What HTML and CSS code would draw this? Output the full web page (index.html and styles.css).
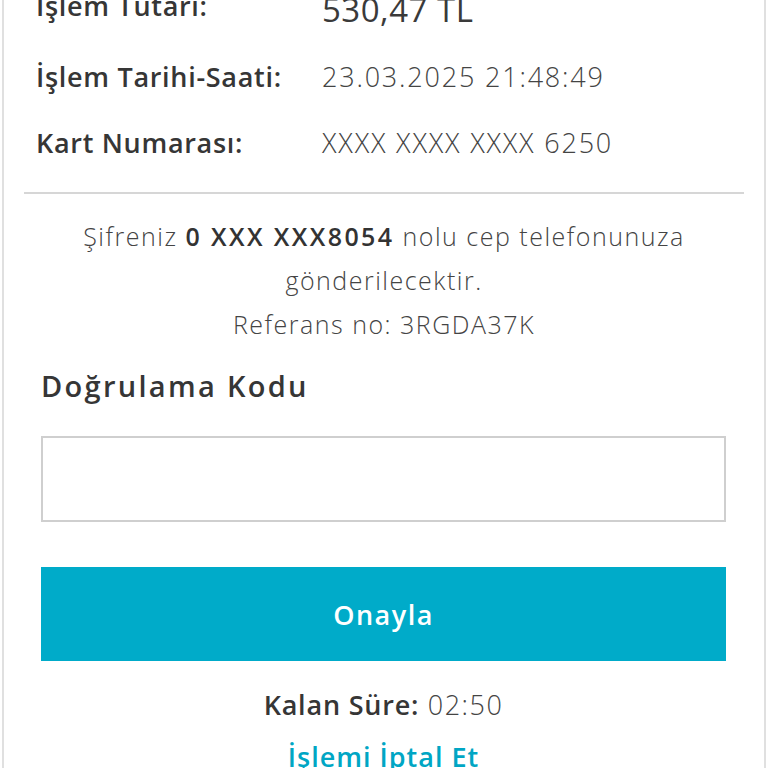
FILE: index.html
```html
<!DOCTYPE html>
<html lang="tr">
<head>
<meta charset="utf-8">
<link rel="stylesheet" href="styles.css">
</head>
<body>
<div class="card">
  <div class="details">
    <div class="row first"><span class="label">İşlem Tutarı:</span><span class="value amount">530,47 TL</span></div>
    <div class="row"><span class="label">İşlem Tarihi-Saati:</span><span class="value">23.03.2025 21:48:49</span></div>
    <div class="row"><span class="label">Kart Numarası:</span><span class="value">XXXX XXXX XXXX 6250</span></div>
  </div>
  <hr class="divider">
  <div class="info">
    <p>Şifreniz <b>0 XXX XXX8054</b> nolu cep telefonunuza gönderilecektir.</p>
    <p>Referans no: 3RGDA37K</p>
  </div>
  <div class="form">
    <label class="code-label" for="code">Doğrulama Kodu</label>
    <input class="code-input" id="code" type="text">
    <button class="confirm" type="button">Onayla</button>
    <div class="timer"><b>Kalan Süre:</b> 02:50</div>
    <a class="cancel" href="#">İşlemi İptal Et</a>
  </div>
</div>
</body>
</html>
```
FILE: styles.css
```css
html, body {
  margin: 0;
  padding: 0;
  background: #fff;
}
body {
  font-family: "Open Sans", "Lato", sans-serif;
  color: #3a3a3a;
  overflow: hidden;
  height: 768px;
}
.card {
  box-sizing: border-box;
  margin: 0 2px;
  min-height: 800px;
  border-left: 2px solid #e0e0e0;
  border-right: 2px solid #e0e0e0;
}
.details {
  padding: 0 0 0 32px;
  margin-top: -22px;
}
.row {
  display: grid;
  grid-template-columns: 286px 1fr;
  align-items: baseline;
  height: 66px;
  line-height: 66px;
  white-space: nowrap;
}
.row.first {
  align-items: end;
  height: 56px;
  line-height: 56px;
  margin-bottom: 10px;
}
.row.first .label {
  margin-bottom: 4px;
}
.label {
  font-weight: 600;
  font-size: 27px;
  letter-spacing: 0.7px;
  color: #363636;
}
.value {
  font-weight: 300;
  font-size: 27px;
  letter-spacing: 1.8px;
  color: #444;
}
.amount {
  font-size: 33px;
  font-weight: 400;
  letter-spacing: 0.5px;
  color: #3a3a3a;
}
.divider {
  border: 0;
  height: 2px;
  background: #d6d6d6;
  margin: 16px 20px 0 20px;
}
.info {
  text-align: center;
  font-size: 25px;
  font-weight: 300;
  letter-spacing: 1.5px;
  color: #444;
  line-height: 44px;
  padding: 20px 60px 0;
}
.info p {
  margin: 0;
}
.info b {
  font-weight: 600;
  letter-spacing: 2.4px;
  color: #333;
}
.form {
  display: flex;
  flex-direction: column;
  padding: 0 38px 0 37px;
}
.code-label {
  font-size: 29px;
  font-weight: 600;
  letter-spacing: 2.3px;
  color: #363636;
  margin-top: 22px;
  line-height: 36px;
}
.code-input {
  box-sizing: border-box;
  height: 86px;
  border: 2px solid #cfcfcf;
  margin-top: 32px;
  font-size: 26px;
  outline: none;
}
.confirm {
  margin-top: 45px;
  height: 94px;
  border: 0;
  background: #00abc9;
  color: #fff;
  font-family: inherit;
  font-size: 27px;
  font-weight: 600;
  letter-spacing: 1.5px;
}
.timer {
  text-align: center;
  font-size: 27px;
  font-weight: 300;
  letter-spacing: 1.5px;
  color: #444;
  margin-top: 26px;
  line-height: 36px;
}
.timer b {
  font-weight: 600;
  letter-spacing: 0.8px;
  color: #363636;
}
.cancel {
  text-align: center;
  font-size: 27px;
  font-weight: 600;
  letter-spacing: 1px;
  color: #00a6c4;
  text-decoration: none;
  margin-top: 16px;
  line-height: 36px;
}
```
